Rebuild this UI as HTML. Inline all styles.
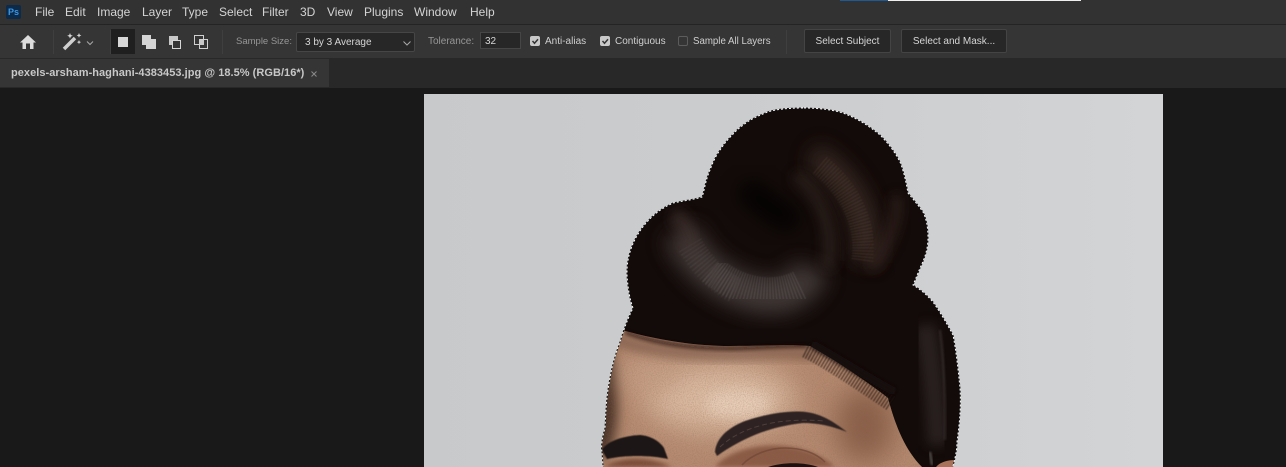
<!DOCTYPE html>
<html><head><meta charset="utf-8"><style>
html,body{margin:0;padding:0;background:#191919;width:1286px;height:467px;overflow:hidden}
#r{position:relative;width:1286px;height:467px;overflow:hidden;background:#191919;font-family:"Liberation Sans",sans-serif;color:#d6d6d6}
#r div{position:absolute;white-space:nowrap}
.m{top:5px;font-size:12px;line-height:14px;color:#d4d4d4}
.o{top:35px;font-size:10px;line-height:13px;color:#cfcfcf}
.l{color:#969696}
.btn{background:#272727;border:1px solid #444;border-radius:2px;box-sizing:border-box;text-align:center;font-size:10px;color:#d6d6d6}
.cb{width:10px;height:10px;background:#c8c8c8;border-radius:2px;top:36px}
.sep{width:1px;background:#3f3f3f;top:30px;height:24px}
svg{position:absolute;left:0;top:0}
</style></head><body><div id="r">
<div style="left:0;top:0;width:1286px;height:24px;background:#323232"></div>
<div style="left:0;top:24px;width:1286px;height:1px;background:#242424"></div>
<div style="left:0;top:25px;width:1286px;height:33px;background:#353535"></div>
<div style="left:0;top:58px;width:1286px;height:30px;background:#282828"></div>
<div style="left:0;top:88px;width:1286px;height:379px;background:#191919"></div>
<div style="left:0;top:59px;width:329px;height:28px;background:#353535"></div>
<div style="left:840px;top:0;width:48px;height:1px;background:#1d5a96"></div>
<div style="left:888px;top:0;width:193px;height:1px;background:#f0f0f0"></div>

<div style="left:6px;top:5px;width:15px;height:14px;background:#0c2a4a;border-radius:2px;color:#3a96e4;font-size:9px;font-weight:bold;line-height:14px;text-align:center">Ps</div>
<div class="m" style="left:35px">File</div>
<div class="m" style="left:65px">Edit</div>
<div class="m" style="left:97px">Image</div>
<div class="m" style="left:142px">Layer</div>
<div class="m" style="left:182px">Type</div>
<div class="m" style="left:219px">Select</div>
<div class="m" style="left:262px">Filter</div>
<div class="m" style="left:300px">3D</div>
<div class="m" style="left:327px">View</div>
<div class="m" style="left:364px">Plugins</div>
<div class="m" style="left:414px">Window</div>
<div class="m" style="left:470px">Help</div>

<div class="sep" style="left:53px"></div>
<div class="sep" style="left:110px"></div>
<div class="sep" style="left:222px"></div>
<div class="sep" style="left:786px"></div>
<div style="left:111px;top:29px;width:24px;height:25px;background:#1f1f1f"></div>

<svg width="1286" height="467" viewBox="0 0 1286 467">
<defs>
<linearGradient id="bg" x1="0" y1="0" x2="1" y2="0"><stop offset="0" stop-color="#c7c9cb"/><stop offset=".5" stop-color="#cbcdcf"/><stop offset="1" stop-color="#d2d4d6"/></linearGradient>
<filter id="b05" x="-30%" y="-30%" width="160%" height="160%"><feGaussianBlur stdDeviation=".5"/></filter>
<filter id="b2" x="-30%" y="-30%" width="160%" height="160%"><feGaussianBlur stdDeviation="2"/></filter>
<filter id="b1" x="-30%" y="-30%" width="160%" height="160%"><feGaussianBlur stdDeviation="1"/></filter>
<filter id="b6" x="-50%" y="-50%" width="200%" height="200%"><feGaussianBlur stdDeviation="6"/></filter>
<filter id="b10" x="-50%" y="-50%" width="200%" height="200%"><feGaussianBlur stdDeviation="10"/></filter>
<filter id="b14" x="-60%" y="-60%" width="220%" height="220%"><feGaussianBlur stdDeviation="14"/></filter>
<filter id="gr" x="0" y="0" width="100%" height="100%"><feTurbulence type="fractalNoise" baseFrequency="0.9" numOctaves="2" seed="4"/><feColorMatrix values="0 0 0 0 .25 0 0 0 0 .14 0 0 0 0 .08 0 0 0 1.4 -.55"/></filter>
<clipPath id="hc"><path d="M803 108C785 108 770 110 763 114C750 119 743 125 737 130C728 139 724 144 720 150C713 160 711 168 708 175C705 184 704 192 702 197C692 200 682 201 673 203C662 208 654 214 647 222C638 232 633 242 630 252C627 262 627 268 627 275C628 290 630 300 633 308C627 320 623 332 620 342C615 355 612 366 610 378C606 398 606 412 605 428C602 438 601 447 602 452L603 467H953C956 455 957 448 957 442C960 420 961 405 960 388C958 368 956 350 953 335C946 322 940 312 933 302C927 295 920 289 913 285C916 278 918 273 920 268C925 258 928 248 928 238C928 226 926 218 923 212C918 205 913 199 908 193C906 182 904 172 900 162C895 152 888 143 880 135C868 125 856 118 843 113C830 109 815 108 803 108Z"/></clipPath>
<clipPath id="fc"><path d="M600 467V380L622 330C650 338 690 346 730 346C765 346 790 344 810 346C835 360 865 380 888 398C895 425 905 450 922 467Z"/></clipPath>
</defs>
<rect x="424" y="94" width="739" height="373" fill="url(#bg)"/>
<g clip-path="url(#hc)">
<rect x="600" y="108" width="362" height="359" fill="#130b09"/>
<g clip-path="url(#fc)">
<rect x="600" y="325" width="325" height="142" fill="#b58a70"/>
<ellipse cx="602" cy="400" rx="16" ry="60" fill="#4a3226" filter="url(#b6)"/>
<ellipse cx="720" cy="398" rx="75" ry="34" fill="#dcbba3" filter="url(#b14)"/>
<ellipse cx="738" cy="404" rx="32" ry="14" fill="#e8cdb8" filter="url(#b6)"/>
<ellipse cx="650" cy="375" rx="30" ry="18" fill="#c8a188" filter="url(#b14)"/>
<ellipse cx="865" cy="425" rx="30" ry="38" fill="#8a5e49" filter="url(#b14)"/>
<path d="M610 338C650 352 700 356 750 354C780 352 800 352 815 356" stroke="#5b3b2d" stroke-width="6" fill="none" filter="url(#b6)"/>
<path d="M715 467C735 442 800 435 835 467Z" fill="#8a5a45" filter="url(#b2)"/>
<path d="M604 467C620 456 650 456 672 467Z" fill="#7a4c39" filter="url(#b2)"/>
<rect x="600" y="325" width="325" height="142" filter="url(#gr)" opacity=".5"/>
</g>
<path d="M625 332C660 345 700 349 740 348C770 347 790 345 808 346" stroke="#130b09" stroke-width="3" fill="none" filter="url(#b2)"/>
<path d="M806 350C830 362 862 384 892 404" stroke="#1c1310" stroke-width="16" stroke-dasharray="1 2" fill="none" filter="url(#b05)" opacity=".8"/>
<path d="M812 344C835 356 865 376 895 392" stroke="#130b09" stroke-width="8" fill="none" filter="url(#b2)"/>
<path d="M715 452C716 440 725 429 745 421C765 414 790 410 806 412C822 414 834 422 847 432C832 426 818 423 803 423C785 425 770 429 757 434C742 440 728 448 717 456Z" fill="#2e2421" filter="url(#b05)"/>
<path d="M720 447C740 428 775 417 825 421" stroke="#5d4a40" stroke-width="1" stroke-dasharray="5 3" fill="none" opacity=".7"/>
<path d="M602 450C606 442 622 436 640 435C652 436 660 442 664 448L668 459C650 455 625 455 607 459Z" fill="#1f1714" filter="url(#b05)"/>
<path d="M742 465C752 454 770 448 785 448C800 448 815 452 825 462" stroke="#6e4635" stroke-width="1.500" fill="none" opacity=".7"/>
<path d="M768 467C782 462 805 462 818 467Z" fill="#1b110e"/>

<path d="M680 232C695 265 725 290 765 296C790 298 805 285 812 268" stroke="#4f4745" stroke-width="36" fill="none" filter="url(#b10)" opacity=".75"/>
<path d="M712 270C735 290 770 300 800 285" stroke="#7a7472" stroke-width="30" stroke-dasharray="1 2" fill="none" filter="url(#b05)" opacity=".38"/>
<path d="M690 245C700 262 715 280 735 290" stroke="#6a625f" stroke-width="26" stroke-dasharray="1 2.500" fill="none" filter="url(#b05)" opacity=".3"/>
<path d="M672 215C685 220 692 235 690 250" stroke="#40332e" stroke-width="16" fill="none" filter="url(#b6)" opacity=".7"/>
<path d="M812 155C848 175 872 215 866 262" stroke="#43332a" stroke-width="24" fill="none" filter="url(#b10)" opacity=".8"/>
<path d="M820 165C850 190 868 225 862 262" stroke="#6a5548" stroke-width="22" stroke-dasharray="1 2" fill="none" filter="url(#b05)" opacity=".3"/>
<path d="M795 175C820 195 836 225 828 268" stroke="#3d312b" stroke-width="12" fill="none" filter="url(#b6)" opacity=".55"/>
<path d="M896 195C900 215 888 250 870 268" stroke="#382820" stroke-width="11" fill="none" filter="url(#b6)" opacity=".7"/>
<path d="M745 185C760 205 785 215 795 225" stroke="#020101" stroke-width="24" fill="none" filter="url(#b10)" opacity=".85"/>
<path d="M925 325C932 365 936 410 938 445" stroke="#3c3634" stroke-width="20" fill="none" filter="url(#b6)" opacity=".55"/>
<path d="M940 330C944 365 946 400 945 440" stroke="#524c4a" stroke-width="2" fill="none" filter="url(#b1)" opacity=".45"/>
<path d="M930 452L932 465" stroke="#b8b8b8" stroke-width="2" opacity=".45" filter="url(#b1)"/>
<path d="M936 467C940 462 948 460 955 460V467Z" fill="#a8735a"/>
</g>
<path d="M803 108C785 108 770 110 763 114C750 119 743 125 737 130C728 139 724 144 720 150C713 160 711 168 708 175C705 184 704 192 702 197C692 200 682 201 673 203C662 208 654 214 647 222C638 232 633 242 630 252C627 262 627 268 627 275C628 290 630 300 633 308C627 320 623 332 620 342C615 355 612 366 610 378C606 398 606 412 605 428C602 438 601 447 602 452L603 466M953 466C956 455 957 448 957 442C960 420 961 405 960 388C958 368 956 350 953 335C946 322 940 312 933 302C927 295 920 289 913 285C916 278 918 273 920 268C925 258 928 248 928 238C928 226 926 218 923 212C918 205 913 199 908 193C906 182 904 172 900 162C895 152 888 143 880 135C868 125 856 118 843 113C830 109 815 108 803 108" fill="none" stroke="#111" stroke-width="1"/>
<path d="M803 108C785 108 770 110 763 114C750 119 743 125 737 130C728 139 724 144 720 150C713 160 711 168 708 175C705 184 704 192 702 197C692 200 682 201 673 203C662 208 654 214 647 222C638 232 633 242 630 252C627 262 627 268 627 275C628 290 630 300 633 308C627 320 623 332 620 342C615 355 612 366 610 378C606 398 606 412 605 428C602 438 601 447 602 452L603 466M953 466C956 455 957 448 957 442C960 420 961 405 960 388C958 368 956 350 953 335C946 322 940 312 933 302C927 295 920 289 913 285C916 278 918 273 920 268C925 258 928 248 928 238C928 226 926 218 923 212C918 205 913 199 908 193C906 182 904 172 900 162C895 152 888 143 880 135C868 125 856 118 843 113C830 109 815 108 803 108" fill="none" stroke="#fff" stroke-width="1" stroke-dasharray="2 2"/>

<path d="M28 35L20 42.500H22.500V49H26V43.500H30V49H33.500V42.500H36Z" fill="#dcdcdc"/>
<path d="M64 49L75 38" stroke="#d0d0d0" stroke-width="3.500"/>
<path d="M70 33l.8 2 2 .8-2 .8-.8 2-.8-2-2-.8 2-.8zM79 33l.7 1.700 1.700.7-1.700.7-.7 1.700-.7-1.700-1.700-.7 1.700-.7zM79 40l.6 1.500 1.500.6-1.500.6-.6 1.500-.6-1.500-1.500-.6 1.500-.6z" fill="#d8d8d8"/>
<path d="M87 41.500l3 3 3-3" fill="none" stroke="#a8a8a8"/>
<rect x="118" y="37" width="10" height="10" fill="#d6d6d6"/>
<path d="M142 35h9v4h5v10h-10v-4h-4z" fill="#d6d6d6"/>
<rect x="169" y="36" width="9" height="9" fill="#c8c8c8"/>
<rect x="172.500" y="40.500" width="8" height="8" fill="#353535" stroke="#d6d6d6"/>
<rect x="194.500" y="35.500" width="9" height="9" fill="none" stroke="#d0d0d0"/>
<rect x="199.500" y="39.500" width="8" height="9" fill="none" stroke="#d0d0d0"/>
<rect x="200" y="40" width="4" height="5" fill="#c8c8c8"/>
<path d="M311.500 71.500l5 5M316.500 71.500l-5 5" stroke="#8a8a8a"/>
</svg>

<div class="o l" style="left:236px;font-size:9.500px">Sample Size:</div>
<div style="left:296px;top:32px;width:119px;height:20px;background:#272727;border:1px solid #464646;box-sizing:border-box;border-radius:2px;font-size:10px;line-height:20px;padding-left:8px;color:#d6d6d6">3 by 3 Average</div>
<div class="o l" style="left:428px">Tolerance:</div>
<div style="left:480px;top:32px;width:41px;height:17px;background:#272727;border:1px solid #464646;box-sizing:border-box;font-size:10px;line-height:17px;padding-left:4px;color:#d6d6d6">32</div>
<div class="cb" style="left:530px"></div>
<div class="o" style="left:545px">Anti-alias</div>
<div class="cb" style="left:600px"></div>
<div class="o" style="left:615px">Contiguous</div>
<div style="left:678px;top:36px;width:10px;height:10px;border:1px solid #5c5c5c;border-radius:2px;box-sizing:border-box"></div>
<div class="o" style="left:693px;font-size:9.700px">Sample All Layers</div>
<div class="btn" style="left:804px;top:29px;width:87px;height:24px;line-height:24px">Select Subject</div>
<div class="btn" style="left:901px;top:29px;width:106px;height:24px;line-height:24px">Select and Mask...</div>
<svg width="1286" height="467" viewBox="0 0 1286 467"><path d="M403.500 41.500l3.500 3.500 3.500-3.500" fill="none" stroke="#a8a8a8"/><path d="M532.500 41l2 2.200 3.500-4M602.500 41l2 2.200 3.500-4" fill="none" stroke="#333" stroke-width="1.500"/></svg>
<div style="left:11px;top:66px;font-size:11px;letter-spacing:.04px;line-height:14px;font-weight:bold;color:#c8c8c8">pexels-arsham-haghani-4383453.jpg @ 18.5% (RGB/16*)</div>
</div></body></html>
